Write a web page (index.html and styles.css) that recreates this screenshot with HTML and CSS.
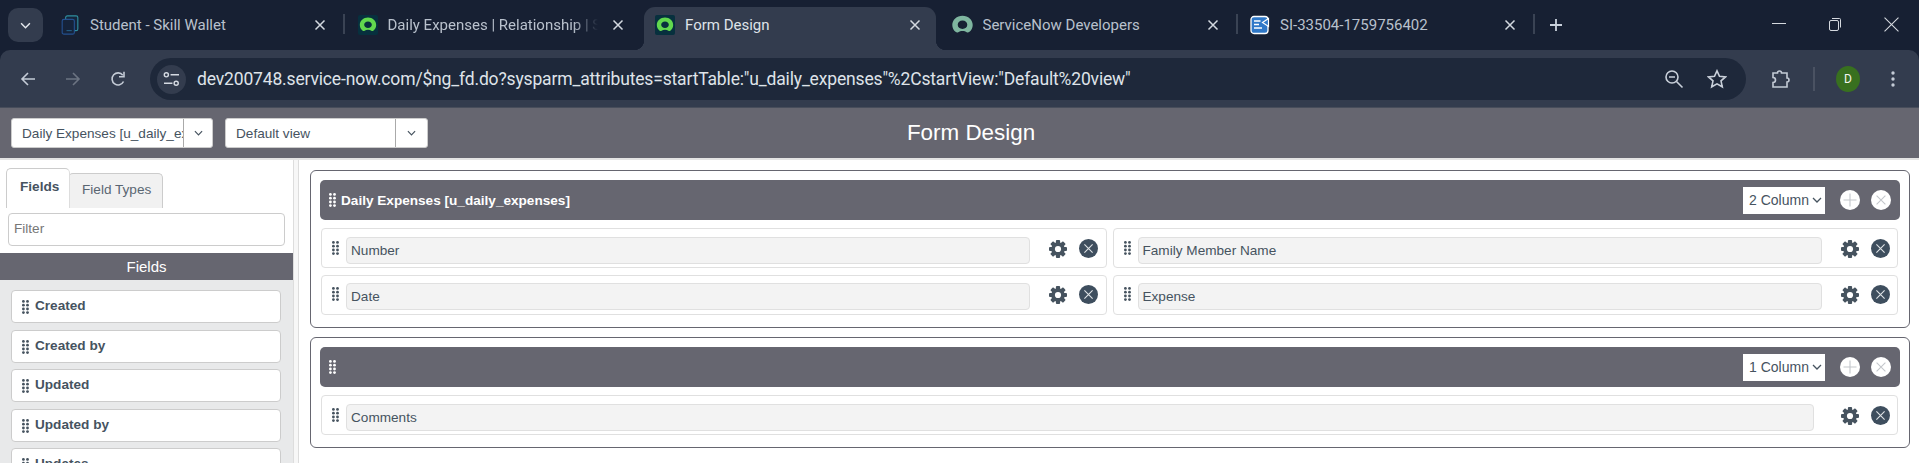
FILE: index.html
```html
<!DOCTYPE html>
<html lang="en">
<head>
<meta charset="utf-8">
<title>Form Design</title>
<link rel="stylesheet" href="styles.css">
</head>
<body>
<svg class="defs" width="0" height="0" aria-hidden="true">
  <defs>
    <symbol id="grip" viewBox="0 0 7 14"><g fill="currentColor"><circle cx="1.4" cy="1.4" r="1.4"/><circle cx="5.5" cy="1.4" r="1.4"/><circle cx="1.4" cy="5.2" r="1.4"/><circle cx="5.5" cy="5.2" r="1.4"/><circle cx="1.4" cy="9" r="1.4"/><circle cx="5.5" cy="9" r="1.4"/><circle cx="1.4" cy="12.6" r="1.4"/><circle cx="5.5" cy="12.6" r="1.4"/></g></symbol>
    <symbol id="gear" viewBox="0 0 18 18"><g fill="#46535f"><rect x="6.9" y="0" width="4.2" height="18" rx="1"/><rect x="6.9" y="0" width="4.2" height="18" rx="1" transform="rotate(45 9 9)"/><rect x="6.9" y="0" width="4.2" height="18" rx="1" transform="rotate(90 9 9)"/><rect x="6.9" y="0" width="4.2" height="18" rx="1" transform="rotate(135 9 9)"/></g><circle cx="9" cy="9" r="5" fill="none" stroke="#46535f" stroke-width="3.6"/><circle cx="9" cy="9" r="3.1" fill="#fff"/></symbol>
    <symbol id="xdark" viewBox="0 0 19 19"><circle cx="9.5" cy="9.5" r="9.5" fill="#3e4e5e"/><path d="M5.4 5.4l8.2 8.2M13.6 5.4l-8.2 8.2" stroke="#dfe3e6" stroke-width="1.1"/></symbol>
    <symbol id="xlight" viewBox="0 0 20 20"><circle cx="10" cy="10" r="10" fill="#fff"/><path d="M5.6 5.6l8.8 8.8M14.4 5.6l-8.8 8.8" stroke="#c4c7cc" stroke-width="1.1"/></symbol>
    <symbol id="pluslight" viewBox="0 0 20 20"><circle cx="10" cy="10" r="10" fill="#fff"/><path d="M10 3.5v13M3.5 10h13" stroke="#c4c7cc" stroke-width="1.1"/></symbol>
    <symbol id="chev" viewBox="0 0 10 6"><path d="M1 1l4 4 4-4" fill="none" stroke="currentColor" stroke-width="1.3"/></symbol>
    <symbol id="close" viewBox="0 0 12 12"><path d="M1.5 1.5l9 9M10.5 1.5l-9 9" stroke="currentColor" stroke-width="1.5"/></symbol>
    <symbol id="snow" viewBox="0 0 20 18"><path fill="currentColor" fill-rule="evenodd" d="M10 .6C4.800.6.800 4.300.800 9c0 2.600 1.200 4.900 3.200 6.400.700.500 1.500.500 2.200.100 1-.700 2.300-1.100 3.800-1.100s2.800.400 3.800 1.100c.700.400 1.500.400 2.200-.100 2-1.500 3.200-3.800 3.200-6.400C19.200 4.300 15.200.6 10 .6zm0 11.900c-2.500 0-4.300-1.600-4.300-3.700S7.500 5 10 5s4.300 1.700 4.300 3.800-1.800 3.700-4.300 3.700z"/></symbol>
  </defs>
</svg>

<header class="chrome">
  <div class="tabstrip">
    <button class="tabmenu" type="button"><svg class="tabmenu-icon"><use href="#chev"/></svg></button>
    <div class="tab tab-sep">
      <svg class="favicon" viewBox="0 0 20 23"><rect x="5" y="1" width="14" height="17" rx="2" fill="#14263c" stroke="#2f8f9f" stroke-width="1.300"/><rect x="1" y="5" width="14" height="17" rx="2" fill="#15233a" stroke="#24508f" stroke-width="1.300"/><path d="M6 18h6" stroke="#2a6f9a" stroke-width="1"/></svg>
      <span class="tab-title">Student - Skill Wallet</span>
      <svg class="tab-close"><use href="#close"/></svg>
    </div>
    <div class="tab">
      <span class="favicon snow-box"><svg class="snow-icon"><use href="#snow"/></svg></span>
      <span class="tab-title tab-fade">Daily Expenses | Relationship | ServiceNow</span>
      <svg class="tab-close"><use href="#close"/></svg>
    </div>
    <div class="tab tab-active">
      <span class="favicon snow-box"><svg class="snow-icon"><use href="#snow"/></svg></span>
      <span class="tab-title">Form Design</span>
      <svg class="tab-close"><use href="#close"/></svg>
    </div>
    <div class="tab tab-sep">
      <span class="favicon snow-plain"><svg class="snow-icon-lg"><use href="#snow"/></svg></span>
      <span class="tab-title">ServiceNow Developers</span>
      <svg class="tab-close"><use href="#close"/></svg>
    </div>
    <div class="tab tab-sep">
      <svg class="favicon" viewBox="0 0 20 20"><rect x="1" y="1.500" width="17" height="17" rx="3" fill="#2f78c8" stroke="#fff" stroke-width="1.300"/><path d="M4 6h6.500M4 9.500h5M4 13h8" stroke="#fff" stroke-width="1.500"/><path d="M18.500 3.500l-6 4 6 4z" fill="#2f78c8" stroke="#fff" stroke-width="1.200"/></svg>
      <span class="tab-title">SI-33504-1759756402</span>
      <svg class="tab-close"><use href="#close"/></svg>
    </div>
    <svg class="newtab" viewBox="0 0 14 14"><path d="M7 1v12M1 7h12" stroke="#c9d1dc" stroke-width="1.800"/></svg>
    <div class="winctl">
      <svg class="win" viewBox="0 0 14 14"><path d="M0 6.500h14" stroke="#d5d9df" stroke-width="1"/></svg>
      <svg class="win" viewBox="0 0 14 14"><rect x="1.500" y="3.500" width="9" height="10" rx="1.500" fill="none" stroke="#d5d9df"/><path d="M4 1.500h7.500a1 1 0 0 1 1 1v8" fill="none" stroke="#d5d9df"/></svg>
      <svg class="win win-x" viewBox="0 0 14 14"><path d="M.5.500l13 13M13.500.500l-13 13" stroke="#d5d9df" stroke-width="1"/></svg>
    </div>
  </div>
  <div class="toolbar">
    <div class="nav">
      <svg class="navicon" viewBox="0 0 16 16"><path d="M15 8H2M8 2L2 8l6 6" fill="none" stroke="#c4cbd6" stroke-width="1.600"/></svg>
      <svg class="navicon" viewBox="0 0 16 16"><path d="M1 8h13M8 2l6 6-6 6" fill="none" stroke="#6c7482" stroke-width="1.600"/></svg>
      <svg class="navicon" viewBox="0 0 16 16"><path d="M13.500 10.500A6 6 0 1 1 12.800 4.200" fill="none" stroke="#c4cbd6" stroke-width="1.600"/><path d="M14 0.800v5h-5" fill="none" stroke="#c4cbd6" stroke-width="1.600"/></svg>
    </div>
    <div class="omnibox">
      <span class="siteinfo"><svg class="siteinfo-icon" viewBox="0 0 18 16"><circle cx="3.500" cy="3" r="2.200" fill="none" stroke="#d5dae2" stroke-width="1.500"/><path d="M8 3h9M1 12h9" stroke="#d5dae2" stroke-width="1.500"/><circle cx="14" cy="12" r="2.200" fill="none" stroke="#d5dae2" stroke-width="1.500"/></svg></span>
      <span class="url">dev200748.service-now.com/$ng_fd.do?sysparm_attributes=startTable:"u_daily_expenses"%2CstartView:"Default%20view"</span>
      <svg class="omni-icon omni-zoom" viewBox="0 0 20 20"><circle cx="8" cy="8" r="6" fill="none" stroke="#c9d0da" stroke-width="1.600"/><path d="M5 8h6M12.500 12.500l6 6" stroke="#c9d0da" stroke-width="1.600"/></svg>
      <svg class="omni-icon" viewBox="0 0 20 20"><path d="M10 1.800l2.500 5.500 6 .6-4.500 4 1.300 5.900-5.300-3-5.300 3L6 11.900l-4.500-4 6-.6z" fill="none" stroke="#c9d0da" stroke-width="1.600"/></svg>
    </div>
    <div class="tools">
      <svg class="ext" viewBox="0 0 20 20"><path d="M2 4h4.500a2 2 0 0 1 4 0H16v5a2 2 0 0 1 0 4v5H2v-4.500a2.500 2.500 0 0 0 0-5z" fill="none" stroke="#c4cbd6" stroke-width="1.600"/></svg>
      <span class="tool-sep"></span>
      <span class="avatar">D</span>
      <svg class="kebab" viewBox="0 0 4 18"><circle cx="2" cy="3" r="1.700" fill="#c4cbd6"/><circle cx="2" cy="9" r="1.700" fill="#c4cbd6"/><circle cx="2" cy="15" r="1.700" fill="#c4cbd6"/></svg>
    </div>
  </div>
</header>

<div class="fd-header">
  <div class="fd-selects">
    <div class="combo combo-a"><span class="combo-text">Daily Expenses [u_daily_expenses]</span><span class="combo-btn"><svg class="combo-chev"><use href="#chev"/></svg></span></div>
    <div class="combo combo-b"><span class="combo-text">Default view</span><span class="combo-btn"><svg class="combo-chev"><use href="#chev"/></svg></span></div>
  </div>
  <h1 class="fd-title">Form Design</h1>
</div>

<main class="workspace">
  <aside class="sidebar">
    <div class="side-tabs">
      <span class="side-tab side-tab-on">Fields</span>
      <span class="side-tab">Field Types</span>
    </div>
    <div class="filter">Filter</div>
    <div class="side-head">Fields</div>
    <div class="side-list">
      <div class="item"><svg class="grip"><use href="#grip"/></svg>Created</div>
      <div class="item"><svg class="grip"><use href="#grip"/></svg>Created by</div>
      <div class="item"><svg class="grip"><use href="#grip"/></svg>Updated</div>
      <div class="item"><svg class="grip"><use href="#grip"/></svg>Updated by</div>
      <div class="item"><svg class="grip"><use href="#grip"/></svg>Updates</div>
    </div>
  </aside>
  <div class="splitter"></div>
  <section class="canvas">
    <div class="section">
      <div class="sec-head">
        <svg class="grip grip-white"><use href="#grip"/></svg>
        <span class="sec-title">Daily Expenses [u_daily_expenses]</span>
        <div class="colsel">2 Column<svg class="colsel-chev"><use href="#chev"/></svg></div>
        <svg class="sec-btn sec-plus"><use href="#pluslight"/></svg>
        <svg class="sec-btn sec-x"><use href="#xlight"/></svg>
      </div>
      <div class="fields fields-2">
        <div class="field"><svg class="grip"><use href="#grip"/></svg><span class="input">Number</span><span class="actions"><svg class="gear"><use href="#gear"/></svg><svg class="xbtn"><use href="#xdark"/></svg></span></div>
        <div class="field field-end"><svg class="grip"><use href="#grip"/></svg><span class="input">Family Member Name</span><span class="actions"><svg class="gear"><use href="#gear"/></svg><svg class="xbtn"><use href="#xdark"/></svg></span></div>
        <div class="field field-low"><svg class="grip"><use href="#grip"/></svg><span class="input">Date</span><span class="actions"><svg class="gear"><use href="#gear"/></svg><svg class="xbtn"><use href="#xdark"/></svg></span></div>
        <div class="field field-low field-end"><svg class="grip"><use href="#grip"/></svg><span class="input">Expense</span><span class="actions"><svg class="gear"><use href="#gear"/></svg><svg class="xbtn"><use href="#xdark"/></svg></span></div>
      </div>
    </div>
    <div class="section">
      <div class="sec-head">
        <svg class="grip grip-white"><use href="#grip"/></svg>
        <span class="sec-title"></span>
        <div class="colsel">1 Column<svg class="colsel-chev"><use href="#chev"/></svg></div>
        <svg class="sec-btn sec-plus"><use href="#pluslight"/></svg>
        <svg class="sec-btn sec-x"><use href="#xlight"/></svg>
      </div>
      <div class="fields">
        <div class="field field-end"><svg class="grip"><use href="#grip"/></svg><span class="input">Comments</span><span class="actions actions-wide"><svg class="gear"><use href="#gear"/></svg><svg class="xbtn"><use href="#xdark"/></svg></span></div>
      </div>
    </div>
  </section>
</main>
</body>
</html>
```
FILE: styles.css
```css
* { box-sizing: border-box; }
html, body { margin: 0; height: 463px; overflow: hidden; background: #fff; }
body { font-family: "Liberation Sans", Arial, sans-serif; font-size: 13.6px; color: #46535f; display: flex; flex-direction: column; }
.defs { position: absolute; }

/* browser chrome */
.chrome { background: #172033; flex: none; }
.tabstrip { height: 50px; display: flex; align-items: flex-start; padding-left: 8px; font-family: Roboto, "Noto Sans", sans-serif; }
.tabmenu { width: 35px; height: 34px; margin-top: 8px; margin-right: 6px; padding: 0; border: 0; border-radius: 10px; background: #333c4e; color: #e6e9ee; display: flex; align-items: center; justify-content: center; }
.tabmenu-icon { width: 11px; height: 7px; }
.tab { width: 292px; height: 43px; margin-top: 7px; margin-right: 5.5px; padding-left: 11px; position: relative; display: flex; align-items: center; color: #b9c1cd; font-size: 15px; }
.tab-active { background: #333c4e; border-radius: 11px 11px 0 0; color: #dfe3e9; }
.tab-active::before, .tab-active::after { content: ""; position: absolute; bottom: 0; width: 10px; height: 10px; }
.tab-active::before { left: -10px; background: radial-gradient(circle at 0 0, transparent 10px, #333c4e 10.5px); }
.tab-active::after { right: -10px; background: radial-gradient(circle at 100% 0, transparent 10px, #333c4e 10.5px); }
.tab-sep::after { content: ""; position: absolute; right: -4px; top: 7px; width: 2px; height: 20px; background: #3a4354; }
.favicon { width: 20px; height: 20px; flex: none; margin-top: -7px; }
.snow-box { background: #07303e; color: #62d84e; border-radius: 2px; display: flex; align-items: center; justify-content: center; }
.snow-icon { width: 18px; height: 16px; }
.snow-plain { color: #7fb6a0; display: flex; align-items: center; justify-content: center; }
.snow-icon-lg { width: 23px; height: 20px; flex: none; }
.tab-title { margin-left: 10px; margin-top: -7px; flex: 1; min-width: 0; white-space: nowrap; overflow: hidden; }
.tab-fade { -webkit-mask-image: linear-gradient(90deg, #000 88%, transparent 100%); mask-image: linear-gradient(90deg, #000 88%, transparent 100%); }
.tab-close { width: 12px; height: 12px; flex: none; margin: -7px 15px 0 14px; color: #d4d9e0; }
.newtab { width: 14px; height: 14px; flex: none; margin: 18px 0 0 12px; }
.winctl { margin-left: auto; display: flex; gap: 42px; padding: 17px 20px 0 0; }
.win { width: 14px; height: 14px; }
.win-x { width: 15px; height: 15px; }

.toolbar { height: 58px; background: #333c4e; border-radius: 10px 10px 0 0; border-bottom: 1px solid #474d5b; display: flex; align-items: flex-start; padding-top: 8px; font-family: Roboto, "Noto Sans", sans-serif; }
.nav { flex: none; width: 150px; display: flex; gap: 29px; padding: 13px 0 0 20px; }
.navicon { width: 16px; height: 16px; }
.omnibox { width: 1596px; height: 42px; border-radius: 21px; background: #1e283a; display: flex; align-items: center; padding-left: 7px; color: #dfe3e9; }
.siteinfo { width: 29px; height: 29px; border-radius: 50%; background: #333c4e; display: flex; align-items: center; justify-content: center; flex: none; }
.siteinfo-icon { width: 17px; height: 15px; }
.url { margin-left: 11px; flex: 1; font-size: 17.5px; letter-spacing: -0.16px; white-space: nowrap; overflow: hidden; }
.omni-icon { width: 20px; height: 20px; flex: none; margin-right: 19px; }
.omni-zoom { margin-right: 23px; }
.tools { flex: 1; display: flex; align-items: center; height: 42px; padding-left: 25px; }
.ext { width: 20px; height: 20px; flex: none; }
.tool-sep { width: 2px; height: 24px; background: #4a5262; margin-left: 22px; }
.avatar { width: 24px; height: 26px; border-radius: 50%; background: #38701f; color: #f2f5ee; margin-left: 21px; font-size: 12px; display: flex; align-items: center; justify-content: center; }
.kebab { width: 4px; height: 18px; margin-left: 31px; }

/* form design header */
.fd-header { height: 50px; flex: none; background: #666670; display: grid; grid-template-columns: 1fr auto 1fr; align-items: center; padding-left: 11px; }
.fd-selects { display: flex; gap: 12px; }
.combo { height: 30px; background: #fff; border-radius: 3px; display: flex; align-items: center; border: 1px solid #ccc; color: #46535f; }
.combo-a { width: 202px; }
.combo-b { width: 203px; }
.combo-text { flex: 1; min-width: 0; padding-left: 10px; overflow: hidden; white-space: nowrap; }
.combo-btn { width: 32px; height: 100%; flex: none; border-left: 1px solid #aaa; display: flex; align-items: center; justify-content: center; }
.combo-a .combo-btn { width: 29px; }
.combo-chev { width: 9px; height: 6px; }
.fd-title { margin: 0 0 0 12px; font-size: 22.4px; font-weight: 400; color: #fff; }

/* workspace */
.workspace { flex: 1; min-height: 0; display: flex; overflow: hidden; border-top: 2px solid #e4e4e4; }
.sidebar { width: 293px; flex: none; display: flex; flex-direction: column; }
.side-tabs { display: flex; align-items: flex-end; height: 48px; padding-left: 6px; }
.side-tab { height: 35px; width: 95px; margin-left: -2px; padding: 8px 0 0 13px; background: #f1f1f1; border: 1px solid #ccc; border-bottom: 0; border-radius: 5px 5px 0 0; color: #5a6672; }
.side-tab-on { height: 40px; width: 64px; margin-left: 0; background: #fff; padding: 10px 0 0 13px; font-weight: 700; color: #46535f; border-right: 1px solid #ddd; z-index: 1; }
.filter { height: 33px; margin: 5px 8px 0; border: 1px solid #ccc; border-radius: 4px; padding: 7px 5px; color: #777; line-height: 16px; }
.side-head { height: 27px; margin-top: 7px; background: #666670; color: #fff; font-size: 15px; text-align: center; line-height: 27px; }
.side-list { flex: 1; min-height: 0; background: #e8e9ea; padding: 10px 12px 0 11px; display: flex; flex-direction: column; gap: 6.5px; overflow: hidden; }
.item { height: 33px; flex: none; background: #fff; border: 1px solid #ccc; border-radius: 4px; display: flex; align-items: flex-start; padding: 7px 0 0 10px; font-weight: 700; line-height: 16px; }
.grip { width: 7px; height: 14px; flex: none; color: #46535f; }
.item .grip { margin: 2px 6px 0 0; }
.splitter { width: 6px; flex: none; background: #f7f7f7; border: solid #ddd; border-width: 0 1px; }

.canvas { flex: 1; min-width: 0; padding: 10px 9px 0 11px; display: flex; flex-direction: column; gap: 9px; }
.section { border: 1px solid #666670; border-radius: 6px; padding: 9px 9px 12px; }
.sec-head { height: 40px; background: #666670; border-radius: 5px; display: flex; align-items: center; padding: 0 9px; color: #fff; }
.grip-white { color: #fff; margin-right: 5px; }
.sec-title { flex: 1; font-weight: 700; color: #fff; }
.colsel { width: 82px; height: 27px; background: #fff; color: #46535f; display: flex; align-items: center; padding-left: 6px; flex: none; font-size: 14px; }
.colsel-chev { width: 10px; height: 6px; margin-left: 3px; }
.sec-btn { width: 20px; height: 20px; flex: none; }
.sec-plus { margin-left: 15px; }
.sec-x { margin-left: 11px; }
.fields { margin: 8px 2px 0 1px; display: grid; gap: 7px 6px; }
.fields-2 { grid-template-columns: 1fr 1fr; }
.field { height: 40px; border: 1px solid #e0e0e0; border-radius: 4px; display: flex; align-items: flex-start; padding: 8px 8px 0 10px; }
.field-low { padding-top: 7px; }
.field-end { padding-right: 7px; }
.field > .grip { margin: 4px 7px 0 0; }
.input { flex: 1; min-width: 0; height: 27px; background: #f3f3f3; border: 1px solid #e0e0e0; border-radius: 4px; padding: 0 4px; line-height: 25px; color: #46535f; }
.actions { display: flex; align-items: center; gap: 12px; margin-left: 19px; margin-top: 2px; flex: none; }
.actions-wide { margin-left: 27px; }
.gear { width: 18px; height: 18px; }
.xbtn { width: 19px; height: 19px; }
```
